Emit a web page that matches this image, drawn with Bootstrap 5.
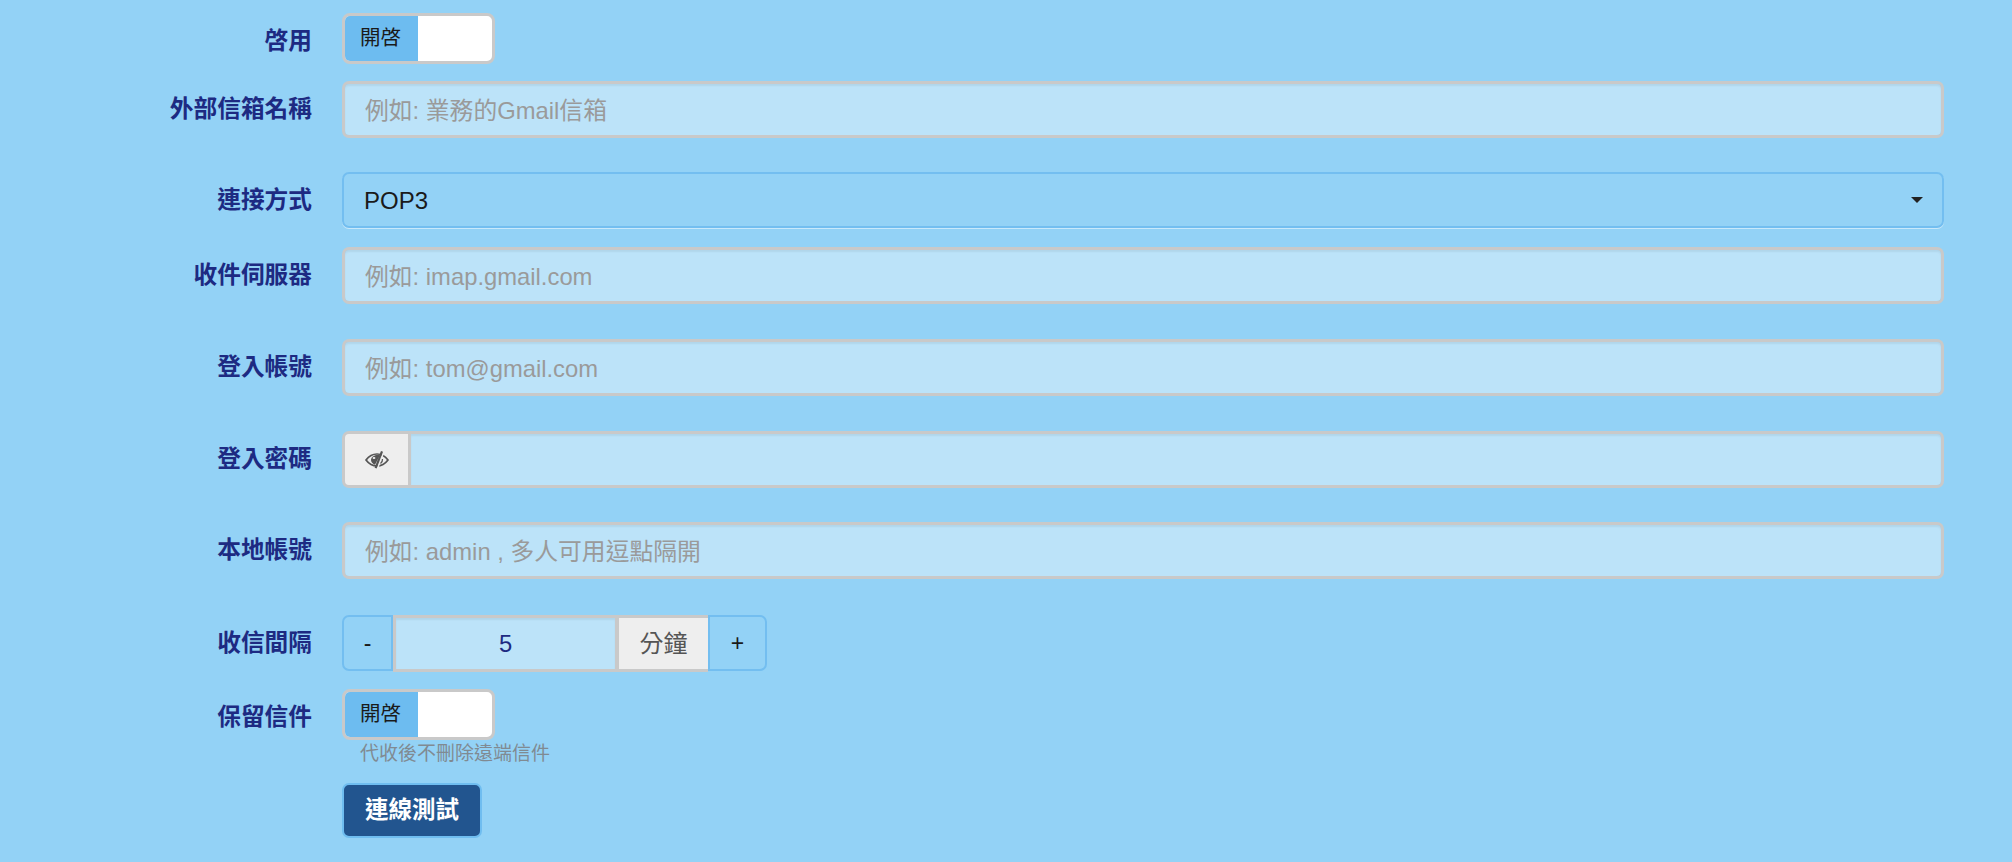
<!DOCTYPE html>
<html lang="zh-Hant">
<head>
<meta charset="utf-8">
<title>外部信箱</title>
<link href="https://cdn.jsdelivr.net/npm/bootstrap@5.3.0/dist/css/bootstrap.min.css" rel="stylesheet">
<style>
html, body { height: 100%; }
body { background: #93d2f6; font-family: "Liberation Sans", "Noto Sans CJK TC", sans-serif; font-size: 24px; overflow: hidden; }
.mail-form { padding: 13px 68px 0 0; }
.field-row { display: flex; align-items: flex-start; }
.gap-a { margin-bottom: 17px; }
.gap-b { margin-bottom: 19px; }
.gap-c { margin-bottom: 34px; }
.gap-d { margin-bottom: 35px; }
.gap-e { margin-bottom: 36px; }
.field-label { flex: 0 0 342px; padding: 10px 30px 0 0; margin: 0; text-align: right; font-size: 23.7px; font-weight: 700; color: #1d2a82; line-height: 36px; }
.field-body { flex: 1 1 auto; min-width: 0; }
.form-control.mail-input { height: 57px; border: 3px solid #c9c9c9; border-radius: 7px; background-color: #bce3f9; color: #1d2a82; font-size: 23.8px; padding: 2px 19px 0 20px; box-shadow: inset 0 2px 2px rgba(0,0,0,.06); }
.form-control.mail-input::placeholder { color: #9a9a9a; }
.form-select.mail-select { height: 56px; border: 2px solid #73bef0; border-radius: 7px; background-color: #93d2f6; color: #1a1a1a; font-size: 24px; padding: 1px 40px 0 20px; box-shadow: 0 1px 0 rgba(255,255,255,.5); background-image: none; }
.select-wrap { position: relative; }
.select-caret { position: absolute; right: 21px; top: 25px; width: 0; height: 0; border-left: 6px solid transparent; border-right: 6px solid transparent; border-top: 6px solid #222; pointer-events: none; }
.on-off { display: flex; width: 153px; height: 51px; border: 3px solid #c9c9c9; border-radius: 8px; overflow: hidden; background: #fff; }
.on-part { flex: 0 0 73px; background: #6dbcf0; color: #1a1a1a; font-size: 20.5px; padding-left: 15px; line-height: 43px; }
.eye-addon, .unit-addon { flex: none; background: #eee; border: 3px solid #c9c9c9; color: #555; display: flex; align-items: center; justify-content: center; }
.eye-addon { width: 69px; height: 57px; border-radius: 7px 0 0 7px; }
.form-control.mail-input.pass-input { flex: 1 1 auto; width: auto; min-width: 0; border-left: 0; border-radius: 0 7px 7px 0; }
.stepper { display: flex; align-items: flex-start; width: 425px; flex: none; }
.btn.step-btn { flex: none; height: 56px; background: #93d2f6; border: 2px solid #73bef0; color: #1a1a1a; font-size: 23px; font-weight: 500; padding: 0; border-radius: 7px 0 0 7px; width: 51px; }
.btn.step-btn.plus { width: 59px; border-radius: 0 7px 7px 0; }
.form-control.mail-input.step-input { width: 226px; flex: none; text-align: center; border-radius: 0; padding: 0; border-right-width: 4px; }
.unit-addon { width: 89px; height: 57px; border-left: 0; border-right: 0; font-size: 24px; }
.hint-text { font-size: 19px; color: #808a92; padding-left: 18px; line-height: 22px; margin-top: 3px; margin-bottom: 18px; }
.btn.test-btn { width: 140px; height: 55px; padding: 0; background: #22558f; border: 2px solid #6fbdf0; border-radius: 7px; color: #fff; font-size: 23.5px; font-weight: 700; }
</style>
</head>
<body>
<form class="mail-form">
  <div class="field-row gap-a">
    <label class="field-label">啓用</label>
    <div class="field-body"><div class="on-off"><div class="on-part">開啓</div></div></div>
  </div>
  <div class="field-row gap-c">
    <label class="field-label">外部信箱名稱</label>
    <div class="field-body"><input class="form-control mail-input" placeholder="例如: 業務的Gmail信箱"></div>
  </div>
  <div class="field-row gap-b">
    <label class="field-label">連接方式</label>
    <div class="field-body select-wrap">
      <select class="form-select mail-select"><option>POP3</option></select>
      <span class="select-caret"></span>
    </div>
  </div>
  <div class="field-row gap-d">
    <label class="field-label">收件伺服器</label>
    <div class="field-body"><input class="form-control mail-input" placeholder="例如: imap.gmail.com"></div>
  </div>
  <div class="field-row gap-d">
    <label class="field-label">登入帳號</label>
    <div class="field-body"><input class="form-control mail-input" placeholder="例如: tom@gmail.com"></div>
  </div>
  <div class="field-row gap-c">
    <label class="field-label">登入密碼</label>
    <div class="field-body d-flex">
      <span class="eye-addon">
        <svg width="24" height="18" viewBox="0 0 24 18" aria-hidden="true">
          <path d="M1 9C4 5 8 3 12 3S20 5 23 9C20 13 16 15 12 15S4 13 1 9Z" fill="none" stroke="#555" stroke-width="1.7"/>
          <path d="M15 4.2C10.5 3.2 6 5.4 6 9C6 11 7.6 12.8 10 13.8Z" fill="#555"/>
          <ellipse cx="9" cy="7" rx="1.4" ry="1.1" fill="#eee"/>
          <path d="M12.4 17.5 18.9 0.5" stroke="#eee" stroke-width="1.7"/>
          <path d="M10.6 17.2 17 .4" stroke="#555" stroke-width="2.2"/>
          <path d="M15.5 12.5C17 11.5 17.6 10 17.5 8" fill="none" stroke="#555" stroke-width="1.3"/>
        </svg>
      </span>
      <input class="form-control mail-input pass-input" type="text">
    </div>
  </div>
  <div class="field-row gap-e">
    <label class="field-label">本地帳號</label>
    <div class="field-body"><input class="form-control mail-input" placeholder="例如: admin , 多人可用逗點隔開"></div>
  </div>
  <div class="field-row gap-a">
    <label class="field-label">收信間隔</label>
    <div class="field-body stepper">
      <button type="button" class="btn step-btn">-</button>
      <input class="form-control mail-input step-input" value="5">
      <span class="unit-addon">分鐘</span>
      <button type="button" class="btn step-btn plus">+</button>
    </div>
  </div>
  <div class="field-row">
    <label class="field-label">保留信件</label>
    <div class="field-body">
      <div class="on-off"><div class="on-part">開啓</div></div>
      <div class="hint-text">代收後不刪除遠端信件</div>
      <button type="button" class="btn test-btn">連線測試</button>
    </div>
  </div>
</form>
</body>
</html>
